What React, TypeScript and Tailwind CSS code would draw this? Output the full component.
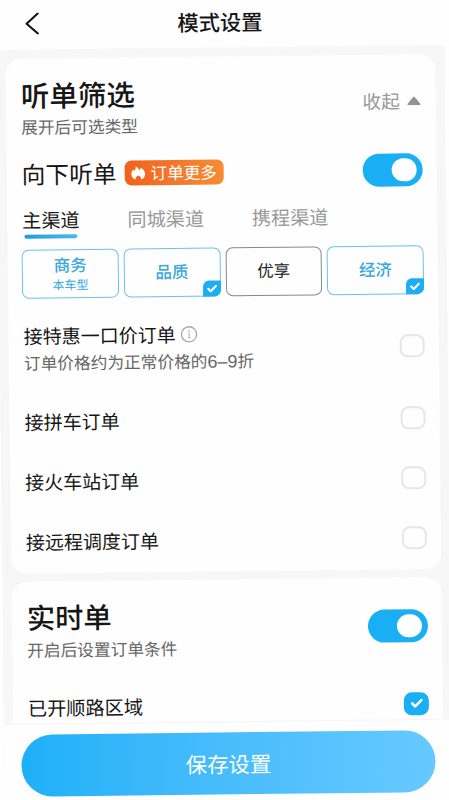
import React, { useState } from 'react';
import clsx from 'clsx';

const CheckMark = ({ className }: { className?: string }) => (
  <svg viewBox="0 0 14 12" fill="none" className={className}>
    <path d="M2.4 6.2 L5.4 9.2 L11.6 3" stroke="white" strokeWidth="2.6" strokeLinecap="round" strokeLinejoin="round" />
  </svg>
);

const Flame = () => (
  <svg viewBox="0 0 16 16" className="h-[15px] w-[15px] shrink-0">
    <path
      d="M5.2 1.2 C7.6 2.2 8.8 3.7 9 5.2 C10 4.6 10.7 3.7 10.8 2.6 C13.8 4.2 15.3 6.8 15.3 9.4 C15.3 12 13.8 14.2 11.2 15 C11.5 13.2 10.4 12 8.1 10.8 C5.9 12 4.8 13.2 5.1 15 C2.4 14.2 0.7 12 0.7 9.4 C0.7 7.2 1.6 5.5 2.9 4.4 C3.1 5 3.5 5.4 4 5.7 C5.2 4.5 5.7 3 5.2 1.2 Z"
      fill="white"
    />
  </svg>
);

const InfoIcon = () => (
  <svg viewBox="0 0 17 17" fill="none" className="h-[17px] w-[17px]">
    <circle cx="8.5" cy="8.5" r="7.6" stroke="#a8a8a8" strokeWidth="1.3" />
    <circle cx="8.5" cy="5.3" r="0.8" fill="#a8a8a8" />
    <path d="M7.7 7.5 H8.7 V12 M7.5 12 H9.7" stroke="#a8a8a8" strokeWidth="0.9" />
  </svg>
);

const Toggle = ({ className }: { className?: string }) => {
  const [on, setOn] = useState(true);
  return (
    <button
      onClick={() => setOn(!on)}
      className={clsx(
        'flex h-[33px] w-[60px] shrink-0 items-center rounded-full px-[6px]',
        on ? 'justify-end bg-[#1aaff5]' : 'justify-start bg-[#dddddd]',
        className
      )}
    >
      <span className="h-[23px] w-[25px] rounded-full bg-white" />
    </button>
  );
};

const Checkbox = ({ initial = false, className }: { initial?: boolean; className?: string }) => {
  const [checked, setChecked] = useState(initial);
  return (
    <button
      onClick={() => setChecked(!checked)}
      className={clsx(
        'flex h-[23px] w-[25px] shrink-0 items-center justify-center rounded-[8px]',
        checked ? 'bg-[#1aaff5]' : 'border-2 border-[#e6e6e6]',
        className
      )}
    >
      {checked && <CheckMark className="h-[12px] w-[14px]" />}
    </button>
  );
};

const channels = ['主渠道', '同城渠道', '携程渠道'];

const carTypes = [
  { name: '商务', note: '本车型', active: true, checked: false },
  { name: '品质', note: '', active: true, checked: true },
  { name: '优享', note: '', active: false, checked: false },
  { name: '经济', note: '', active: true, checked: true },
];

const orderTypes = ['接拼车订单', '接火车站订单', '接远程调度订单'];

const App = () => {
  const [channel, setChannel] = useState(0);

  return (
    <div className="h-[800px] w-[449px] overflow-hidden bg-[#fefefe] font-['Noto_Sans_CJK_SC',sans-serif] text-[#161616]">
      <div className="-ml-1 flex h-[820px] w-[448px] origin-[4px_0] translate-x-[-0.3px] rotate-[-0.66deg] flex-col bg-[#f7f7f7]">
        {/* Header */}
        <header className="grid h-[50px] shrink-0 grid-cols-[60px_1fr_60px] items-center bg-[#fefefe] pb-[3px]">
          <svg viewBox="0 0 14 22" fill="none" className="ml-[29px] h-[22px] w-[14px]">
            <path d="M12.8 1 L1.6 11 L12.8 21" stroke="#111" strokeWidth="2.1" strokeLinecap="round" strokeLinejoin="round" />
          </svg>
          <h1 className="text-center text-[21.3px] leading-[26px] font-medium">模式设置</h1>
        </header>

        {/* Order filter */}
        <section className="mx-[9px] mt-[9px] h-[515px] shrink-0 rounded-[16px] bg-[#fefefe] pt-[19px] pr-[14px] pl-[15px]">
          <div className="flex justify-between">
            <div>
              <h2 className="text-[28.5px] leading-[34px] font-medium">听单筛选</h2>
              <p className="mt-1 text-[16.7px] leading-[22px] text-[#666]">展开后可选类型</p>
            </div>
            <button className="mt-[14px] flex h-[27px] items-center gap-[7px] pr-px text-[18.7px] text-[#999]">
              收起
              <svg viewBox="0 0 14 9" className="h-[9px] w-[14px]">
                <path d="M6.2 0.7 Q7 0 7.8 0.7 L13.4 7.6 Q13.8 9 12.8 9 H1.2 Q0.2 9 0.6 7.6 Z" fill="#939393" />
              </svg>
            </button>
          </div>

          <div className="mt-5 flex h-[33px] items-center">
            <h3 className="text-[23.7px]">向下听单</h3>
            <span className="ml-2 flex h-[25px] w-[99px] items-center gap-[5px] rounded-[7px] bg-gradient-to-r from-[#f2611c] to-[#f58c35] pl-[6px] text-[16.6px] whitespace-nowrap text-white">
              <Flame />
              订单更多
            </span>
            <Toggle className="ml-auto" />
          </div>

          <div className="mt-4 flex h-8 gap-[48px]">
            {channels.map((name, i) => (
              <button
                key={name}
                onClick={() => setChannel(i)}
                className={clsx('flex flex-col items-center text-[19.1px] leading-[26px]', channel !== i && 'text-[#999]')}
              >
                {name}
                {channel === i && <span className="mt-[2px] h-1 w-[53px] rounded-full bg-gradient-to-r from-[#1f9be0] to-[#48b9ef]" />}
              </button>
            ))}
          </div>

          <div className="mt-[11px] -ml-px grid h-[49px] grid-cols-4 gap-[5px]">
            {carTypes.map((car) => (
              <button
                key={car.name}
                className={clsx(
                  'relative flex flex-col items-center justify-center rounded-[7px] border text-[16.5px] leading-[18px]',
                  car.note ? 'pb-px' : 'pb-[3px]',
                  car.active ? 'border-[#6dc2e8] font-medium text-[#36a7df]' : 'border-[#888] text-[#222]'
                )}
              >
                {car.name}
                {car.note && <span className="mt-1 text-[12px] leading-[14px] font-normal">{car.note}</span>}
                {car.checked && (
                  <span className="absolute -right-px -bottom-px flex h-4 w-[18px] items-center justify-center rounded-tl-[6px] rounded-br-[7px] bg-[#1aaff5]">
                    <CheckMark className="h-[10px] w-[12px]" />
                  </span>
                )}
              </button>
            ))}
          </div>

          <div className="mt-[26px] flex items-center justify-between">
            <div>
              <div className="flex items-center gap-[5px] text-[19px] leading-[22px]">
                接特惠一口价订单
                <InfoIcon />
              </div>
              <p className="mt-[5px] text-[16.7px] leading-[22px] text-[#666]">
                订单价格约为正常价格的<span className="font-['Liberation_Sans'] text-[18px]">6–9</span>折
              </p>
            </div>
            <Checkbox />
          </div>

          <div className="mt-[17px]">
            {orderTypes.map((label) => (
              <div key={label} className="flex h-[60.3px] items-center justify-between text-[19px]">
                {label}
                <Checkbox />
              </div>
            ))}
          </div>
        </section>

        {/* Realtime orders */}
        <section className="mx-[9px] mt-2 h-[142px] shrink-0 rounded-t-[16px] bg-[#fefefe] pt-[18px] pr-[14px] pl-[15px]">
          <div className="flex items-center justify-between">
            <div>
              <h2 className="text-[28.3px] leading-[34px] font-medium">实时单</h2>
              <p className="mt-[5px] text-[16.7px] leading-[22px] text-[#666]">开启后设置订单条件</p>
            </div>
            <Toggle />
          </div>
          <div className="mt-[35px] flex h-6 items-center justify-between text-[19.2px]">
            已开顺路区域
            <Checkbox initial />
          </div>
        </section>

        {/* Save bar */}
        <footer className="flex-1 border-t border-[#f5f5f5] bg-[#fefefe] px-[17px] pt-[10px]">
          <button className="h-[62px] w-full rounded-full bg-gradient-to-r from-[#1cb0f8] to-[#66c9ff] text-[21.4px] text-white">
            保存设置
          </button>
        </footer>
      </div>
    </div>
  );
};

export default App;
